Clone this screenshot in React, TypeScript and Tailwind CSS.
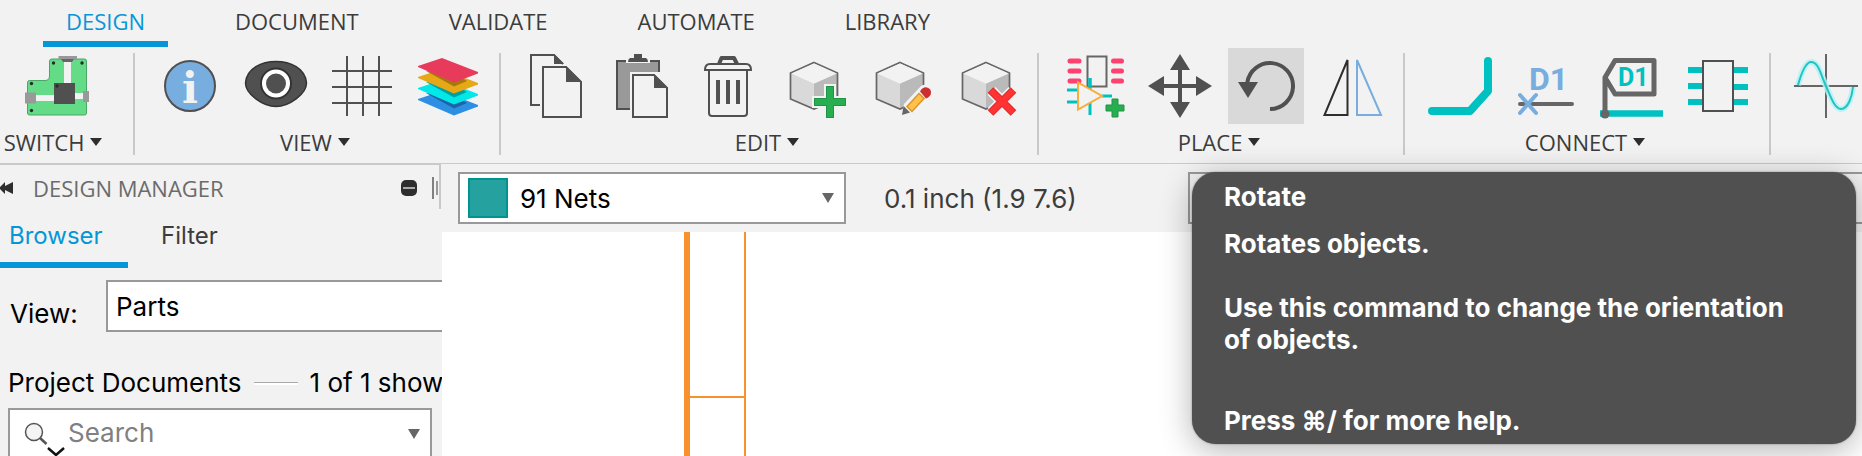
import React from "react";

type Kids = { children: React.ReactNode };

function Icon({ children }: Kids) {
  return (
    <svg viewBox="0 0 64 64" className="size-16 overflow-visible" fill="none" aria-hidden="true">
      {children}
    </svg>
  );
}

function Caret({ className = "h-2 w-3 text-[#2e2e2e]" }: { className?: string }) {
  return (
    <svg viewBox="0 0 12 8" preserveAspectRatio="none" className={className} aria-hidden="true">
      <path d="M0 0h12L6 8z" fill="currentColor" />
    </svg>
  );
}

function BoardIcon() {
  return (
    <Icon>
      <path d="M27 5H59.500Q61.500 5 61.500 7V59Q61.500 61 59.500 61H4.500Q2.500 61 2.500 59V28.500Q2.500 26.500 4.500 26.500H20Q24.500 26.500 24.500 22V7Q24.500 5 27 5Z" fill="#64db87" stroke="#4aa567" />
      <path d="M39 7h7v23h-7zM10 41h20v6H10zM49 39h10v6H49z" fill="#f2f2f2" />
      <path d="M33.500 2H52v3H33.500zM0 38.500h11v11H0zM58 37h6v11h-6z" fill="#999" />
      <path d="M36 5h13l-2 3h-9z" fill="#666" />
      <path d="M29 29h21v21H29z" fill="#505050" />
      <g fill="#2b2b2b">
        <circle cx="28.500" cy="9" r="1.700" />
        <circle cx="57" cy="9" r="1.700" />
        <circle cx="6.500" cy="29.500" r="1.700" />
        <circle cx="6.500" cy="56.500" r="1.700" />
        <circle cx="32" cy="32" r="1.700" />
      </g>
    </Icon>
  );
}

function InfoIcon() {
  return (
    <Icon>
      <circle cx="32" cy="32" r="25" fill="#78addf" stroke="#505050" strokeWidth="2" />
      <text x="32" y="49" textAnchor="middle" fill="#f2f2f2" className="font-['DejaVu_Serif',serif] text-[42px] font-bold">i</text>
    </Icon>
  );
}

function EyeIcon() {
  return (
    <Icon>
      <path d="M1.500 29C2.500 14 18 7.500 32 7.500S61.500 14 62.500 29C62.500 40 45 52.500 32 52.500S1.500 40 1.500 29Z" fill="#505050" stroke="#333" strokeWidth="1.500" />
      <circle cx="32" cy="29.500" r="12.500" fill="#505050" stroke="#333" strokeWidth="7" />
      <circle cx="32" cy="29.500" r="12" fill="#505050" stroke="#fff" strokeWidth="4" />
    </Icon>
  );
}

function GridIcon() {
  return (
    <Icon>
      <path d="M17 2v60M33 2v60M49 2v60M2 17h60M2 33h60M2 49h60" stroke="#505050" strokeWidth="2" />
    </Icon>
  );
}

const layers = [
  { y: 33, fill: "#2d8fe3", shade: "#1e63a4" },
  { y: 22, fill: "#00e8e8", shade: "#00a0a0" },
  { y: 11, fill: "#e6a817", shade: "#a8780c" },
  { y: 0, fill: "#e83b5c", shade: "#e83b5c" },
];

function LayersIcon() {
  return (
    <Icon>
      {layers.map((l) => (
        <g key={l.y} transform={`translate(0 ${l.y})`}>
          <path d="M26 4L62 18v1.500L38 28.500 2 13v-1z" fill={l.fill} />
          {l.y > 0 && <path d="M10 6L38 21.500 51 16 38 8z" fill={l.shade} />}
        </g>
      ))}
    </Icon>
  );
}

function CopyIcon() {
  return (
    <Icon>
      <path d="M16 51H7V1h23l9 9" stroke="#505050" strokeWidth="2" />
      <path d="M30 0l10 10H30zM42 12l16 16H42z" fill="#505050" />
      <path d="M19 13h23l15 15v35H19z" stroke="#505050" strokeWidth="2" />
    </Icon>
  );
}

function PasteIcon() {
  return (
    <Icon>
      <path d="M7 7h42v11H20v37H7z" fill="#999" />
      <path d="M17 7H7v48h13M39 7h10v11" stroke="#505050" strokeWidth="2" />
      <path d="M16 5h24v4H16z" fill="#f2f2f2" />
      <path d="M24 0h8v4h4q2 1 2 4H18q0-3 2-4h4z" fill="#505050" />
      <path d="M44 20l14 14H44z" fill="#505050" />
      <path d="M23 21h21l13 13v29H23z" stroke="#505050" strokeWidth="2" />
    </Icon>
  );
}

function TrashIcon() {
  return (
    <Icon>
      <path d="M13 17v42q0 3 3 3h32q3 0 3-3V17" stroke="#505050" strokeWidth="2" />
      <path d="M9 16q0-6 5-6h36q5 0 5 6z" fill="#f2f2f2" stroke="#505050" strokeWidth="2" />
      <path d="M23 10l2.500-6H38l3 6" stroke="#505050" strokeWidth="4" strokeLinejoin="round" />
      <path d="M20 26h4v24h-4zM30 26h4v24h-4zM40 26h4v24h-4z" fill="#505050" />
    </Icon>
  );
}

function Cube() {
  return (
    <>
      <path d="M8.500 19L32 29.500V54.500L8.500 44.500z" fill="#d9d9d9" />
      <path d="M55.500 19L32 29.500V54.500L55.500 44.500z" fill="#bababa" />
      <path d="M32 8.500L55.500 19v26L32 55 8.500 45V19z" stroke="#666" strokeWidth="1.700" />
      <path d="M32 9.500L54.500 19.500 32 29.500 9.500 19.500z" fill="#f2f2f2" />
    </>
  );
}

function CubeAddIcon() {
  return (
    <Icon>
      <Cube />
      <path d="M44 32h8v12h12v8H52v12h-8V52H32v-8h12z" fill="#27ae50" stroke="#f2f2f2" strokeWidth="4" paintOrder="stroke" />
      <path d="M44.500 32.500h7v12h12v7h-12v12h-7v-12h-12v-7h12z" stroke="#1f9444" />
    </Icon>
  );
}

function CubeEditIcon() {
  return (
    <Icon>
      <Cube />
      <path d="M33 62l3-12 17-18q5-3 9 1t1 8L46 58z" fill="#f2f2f2" />
      <path d="M34 61l1.500-9 6.500 6.500z" fill="#666" />
      <path d="M39 52.500L51 39.500 56 44.500 44 57.500z" fill="#ffc14a" stroke="#d9962c" strokeWidth="1.500" />
      <path d="M52 37.500q3-5 7-4t4 5-5 6z" fill="#cf2e2e" />
    </Icon>
  );
}

function CubeRemoveIcon() {
  return (
    <Icon>
      <Cube />
      <path d="M37.500 37l21 21M58.500 37l-21 21" stroke="#f2f2f2" strokeWidth="11" />
      <path d="M36.500 36l23 23M59.500 36l-23 23" stroke="#dc2a2a" strokeWidth="8" />
      <path d="M37 36.500l22 22M59 36.500l-22 22" stroke="#ff3333" strokeWidth="6" />
    </Icon>
  );
}

function AddPartIcon() {
  return (
    <Icon>
      <path d="M25.500 2.500h19v30h-19z" stroke="#666" strokeWidth="2" />
      <path d="M8 7h9M8 17h9M8 27h9M51.500 7h8M51.500 17h8M51.500 27h8" stroke="#ff4170" strokeWidth="5" strokeLinecap="round" />
      <path d="M28 24v12M28 49v12M5 36h11M5 48h11M40 42h10" stroke="#00c1c1" strokeWidth="3" />
      <path d="M16 28.500v27L40 42z" fill="#f2f2f2" fillOpacity="0.9" stroke="#f9ad37" strokeWidth="2" />
      <path d="M28 24v10" stroke="#00c1c1" strokeWidth="3" />
      <path d="M50 45h6v6h6v6h-6v6h-6v-6h-6v-6h6z" fill="#27ae50" stroke="#1f9444" />
    </Icon>
  );
}

function MoveIcon() {
  return (
    <Icon>
      <path d="M32 12v40M12 32h40" stroke="#505050" strokeWidth="4" />
      <path d="M32 0l10 16H22zM32 64l10-16H22zM0 32l16-10v20zM64 32L48 22v20z" fill="#505050" />
    </Icon>
  );
}

function RotateIcon() {
  return (
    <Icon>
      <path d="M36 55A23 23 0 1 0 13.300 28.500" stroke="#505050" strokeWidth="4" />
      <path d="M4 28h20L14 44z" fill="#505050" />
    </Icon>
  );
}

function MirrorIcon() {
  return (
    <Icon>
      <path d="M27.500 6v55H4.500z" stroke="#2e2e2e" strokeWidth="2" />
      <path d="M37 6v55h24z" stroke="#78addf" strokeWidth="2" />
    </Icon>
  );
}

function NetIcon() {
  return (
    <Icon>
      <path d="M4 57h38l18-20V7" stroke="#00c1c1" strokeWidth="8" strokeLinecap="round" strokeLinejoin="round" />
    </Icon>
  );
}

function NameIcon() {
  return (
    <Icon>
      <text x="15" y="36" fill="#78addf" className="font-['Roboto',sans-serif] text-[32px] font-bold">D1</text>
      <path d="M6 50h52" stroke="#666" strokeWidth="4" strokeLinecap="round" />
      <path d="M6 41l16 18M22 41L6 59" stroke="#78addf" strokeWidth="4" strokeLinecap="round" />
    </Icon>
  );
}

function LabelIcon() {
  return (
    <Icon>
      <path d="M0 59.500h63" stroke="#00c1c1" strokeWidth="6.500" />
      <path d="M5 59V23.500L15 6.500h39v33.500H15L5 23.500" stroke="#666" strokeWidth="5" strokeLinejoin="round" />
      <circle cx="5" cy="60" r="4.500" fill="#666" />
      <text x="18" y="32" fill="#00c1c1" className="font-['Roboto',sans-serif] text-[25px] font-bold">D1</text>
    </Icon>
  );
}

function ChipIcon() {
  return (
    <Icon>
      <path d="M2 16h15M2 32h15M2 48h15M47 16h15M47 33h15M47 48h15" stroke="#00c1c1" strokeWidth="6" />
      <path d="M17 7h30v50H17z" fill="#f2f2f2" stroke="#505050" strokeWidth="2" />
    </Icon>
  );
}

function SineIcon() {
  const wave = "M4 31C8 17 12 8 17 8C25 8 27 22 32 32C37 44 41 55 47 55C54 55 58 43 59 33";
  return (
    <Icon>
      <path d="M0 32h64M32 0v64" stroke="#666" strokeWidth="2" />
      <path d={wave} stroke="#b5f2f4" strokeWidth="6" strokeOpacity="0.85" />
      <path d={wave} stroke="#22c3c3" strokeWidth="2" />
    </Icon>
  );
}

type Tool = { name: string; icon: React.ReactNode; active?: boolean };

function Group({ label, tools, className = "pl-[17px] pr-[15px]" }: { label?: string; tools: Tool[]; className?: string }) {
  return (
    <section className={`relative flex shrink-0 flex-col items-center after:absolute after:right-0 after:top-[5px] after:h-[102px] after:w-0.5 after:bg-[#c9c9c9] ${className}`}>
      <div className="flex gap-2.5">
        {tools.map((t) => (
          <button
            key={t.name}
            type="button"
            aria-label={t.name}
            className={`flex size-19 items-center justify-center ${t.active ? "bg-[#d9d9d9]" : ""}`}
          >
            {t.icon}
          </button>
        ))}
      </div>
      {label && (
        <button type="button" className="mt-[3px] mr-2 flex items-center gap-1.5 text-[22px] leading-[30px] text-[#3c3c3c]">
          {label}
          <Caret />
        </button>
      )}
    </section>
  );
}

const tabs = ["DESIGN", "DOCUMENT", "VALIDATE", "AUTOMATE", "LIBRARY"];

function Ribbon() {
  return (
    <header className="shrink-0 overflow-hidden border-b border-[#c9c9c9] pb-1.5 font-['Open_Sans',sans-serif] [font-kerning:none]">
      <nav className="flex gap-11 pl-[43px]">
        {tabs.map((t, i) => (
          <a
            key={t}
            href="#"
            className={`border-b-6 px-[23px] pt-1.5 pb-[5px] text-[22px] leading-[30px] ${i === 0 ? "border-[#0696d7] text-[#0696d7]" : "border-transparent text-[#3c3c3c]"}`}
          >
            {t}
          </a>
        ))}
      </nav>
      <div className="flex pt-px">
        <Group label="SWITCH" className="w-[135px] pr-[21px]" tools={[{ name: "Switch to board", icon: <BoardIcon /> }]} />
        <Group
          label="VIEW"
          tools={[
            { name: "Info", icon: <InfoIcon /> },
            { name: "Show", icon: <EyeIcon /> },
            { name: "Grid", icon: <GridIcon /> },
            { name: "Layers", icon: <LayersIcon /> },
          ]}
        />
        <Group
          label="EDIT"
          tools={[
            { name: "Copy", icon: <CopyIcon /> },
            { name: "Paste", icon: <PasteIcon /> },
            { name: "Delete", icon: <TrashIcon /> },
            { name: "Add component", icon: <CubeAddIcon /> },
            { name: "Edit component", icon: <CubeEditIcon /> },
            { name: "Remove component", icon: <CubeRemoveIcon /> },
          ]}
        />
        <Group
          label="PLACE"
          tools={[
            { name: "Add part", icon: <AddPartIcon /> },
            { name: "Move", icon: <MoveIcon /> },
            { name: "Rotate", icon: <RotateIcon />, active: true },
            { name: "Mirror", icon: <MirrorIcon /> },
          ]}
        />
        <Group
          label="CONNECT"
          tools={[
            { name: "Net", icon: <NetIcon /> },
            { name: "Name", icon: <NameIcon /> },
            { name: "Label", icon: <LabelIcon /> },
            { name: "Module", icon: <ChipIcon /> },
          ]}
        />
        <Group tools={[{ name: "Simulate", icon: <SineIcon /> }]} />
      </div>
    </header>
  );
}

function DesignManager() {
  return (
    <aside className="flex w-[442px] shrink-0 flex-col overflow-hidden text-[26px] text-black">
      <div className="mr-px flex h-[45px] shrink-0 items-center border-t border-r-2 border-[#c9c9c9] pt-0.5 font-['Open_Sans',sans-serif]">
        <button type="button" aria-label="Collapse panel" className="text-[#2e2e2e]">
          <svg viewBox="0 0 13 12" className="h-3 w-[13px]" aria-hidden="true">
            <path d="M0 5L5 0v4l8-4v12l-8-4v4L0 7z" fill="currentColor" />
          </svg>
        </button>
        <h2 className="ml-5 text-[22px] leading-[30px] text-[#6b6b6b] [font-kerning:none]">DESIGN MANAGER</h2>
        <button type="button" aria-label="Minimize panel" className="mr-[15px] ml-auto flex size-4 items-center justify-center rounded-[5px] bg-[#2e2e2e]">
          <span className="h-0.5 w-3 bg-[#aaa]" />
        </button>
        <span className="h-[22px] w-0.5 bg-[#808080]" />
        <span className="mr-px ml-0.5 h-3.5 w-0.5 bg-[#999]" />
      </div>
      <nav className="flex shrink-0 text-2xl leading-[30px]">
        <a href="#" className="w-32 border-b-6 border-[#0696d7] pt-3 pb-[11px] pl-[9px] leading-[30px] text-[#0696d7]">Browser</a>
        <a href="#" className="pt-3 pl-[33px] leading-[30px] text-[#3c3c3c]">Filter</a>
      </nav>
      <div className="mt-3 flex shrink-0 items-center">
        <label htmlFor="view" className="w-[106px] shrink-0 pt-4 pl-[10px] leading-8">View:</label>
        <select id="view" className="h-[52px] w-[380px] shrink-0 appearance-none border-2 border-[#999] bg-white px-2">
          <option>Parts</option>
        </select>
      </div>
      <div className="mt-[35px] flex shrink-0 items-center pl-2 leading-8 whitespace-nowrap">
        <h3>Project Documents</h3>
        <span className="mx-3 h-[3px] w-11 shrink-0 border-t border-[#aaa] bg-white" />
        <span>1 of 1 shown</span>
      </div>
      <div className="mt-[9px] mr-2.5 ml-2 flex h-[52px] shrink-0 items-center border-2 border-[#999] bg-white pr-2.5 pl-4">
        <button type="button" aria-label="Search options" className="shrink-0">
          <svg viewBox="0 0 40 34" className="h-[34px] w-10 overflow-visible" fill="none" aria-hidden="true">
            <circle cx="8" cy="15" r="8.500" fill="#f4f4f4" stroke="#555" strokeWidth="1.500" />
            <path d="M14 21l6.500 6" stroke="#555" strokeWidth="2.500" />
            <path d="M22 31l8 7 8-7" stroke="#111" strokeWidth="2.500" />
          </svg>
        </button>
        <input type="text" aria-label="Search" placeholder="Search" className="min-w-0 flex-1 pb-1 pl-0.5 outline-none placeholder:text-[#808080]" />
        <Caret className="h-2.5 w-3 text-[#666]" />
      </div>
    </aside>
  );
}

function OptionsBar() {
  return (
    <div className="flex h-[68px] shrink-0 items-center bg-[#f2f2f2] pl-4 text-[26px]">
      <div className="flex h-[52px] w-[388px] shrink-0 items-center border-2 border-[#999] bg-white pr-2.5 pl-2">
        <span className="size-10 shrink-0 border-2 border-[#009490] bg-[#25a19f]" />
        <select aria-label="Net" className="min-w-0 flex-1 appearance-none bg-white pl-3 text-black outline-none">
          <option>91 Nets</option>
        </select>
        <Caret className="h-2.5 w-3 text-[#666]" />
      </div>
      <output className="w-[342px] shrink-0 pl-[38px] text-[#3c3c3c]">0.1 inch (1.9 7.6)</output>
      <input type="text" aria-label="Command" className="h-[52px] min-w-0 flex-1 border-2 border-r-0 border-[#999] bg-[#f2f2f2]" />
    </div>
  );
}

function Schematic() {
  return (
    <div className="min-h-0 flex-1 overflow-hidden bg-white">
      <svg className="h-full w-full" aria-hidden="true">
        <g fill="#f7922f">
          <rect x="242" y="0" width="6" height="100%" />
          <rect x="302" y="0" width="2" height="100%" />
          <rect x="248" y="164" width="55" height="2" />
        </g>
      </svg>
    </div>
  );
}

function RotateTooltip() {
  return (
    <div
      role="tooltip"
      className="absolute top-[172px] right-1.5 h-[272px] w-[664px] rounded-3xl bg-[#505050] pt-[9px] pr-12 pl-8 text-[26px] leading-8 font-bold text-white shadow-[0_6px_32px_rgba(0,0,0,0.3),0_0_2px_rgba(0,0,0,0.4)]"
    >
      <p>Rotate</p>
      <p className="mt-[15px]">Rotates objects.</p>
      <p className="mt-8">Use this command to change the orientation of objects.</p>
      <p className="mt-[49px]">Press ⌘/ for more help.</p>
    </div>
  );
}

export default function App() {
  return (
    <div className="relative flex h-screen flex-col overflow-hidden bg-[#f2f2f2] font-['Inter',sans-serif]">
      <Ribbon />
      <div className="flex min-h-0 flex-1">
        <DesignManager />
        <main className="flex min-w-0 flex-1 flex-col">
          <OptionsBar />
          <Schematic />
        </main>
      </div>
      <RotateTooltip />
    </div>
  );
}
